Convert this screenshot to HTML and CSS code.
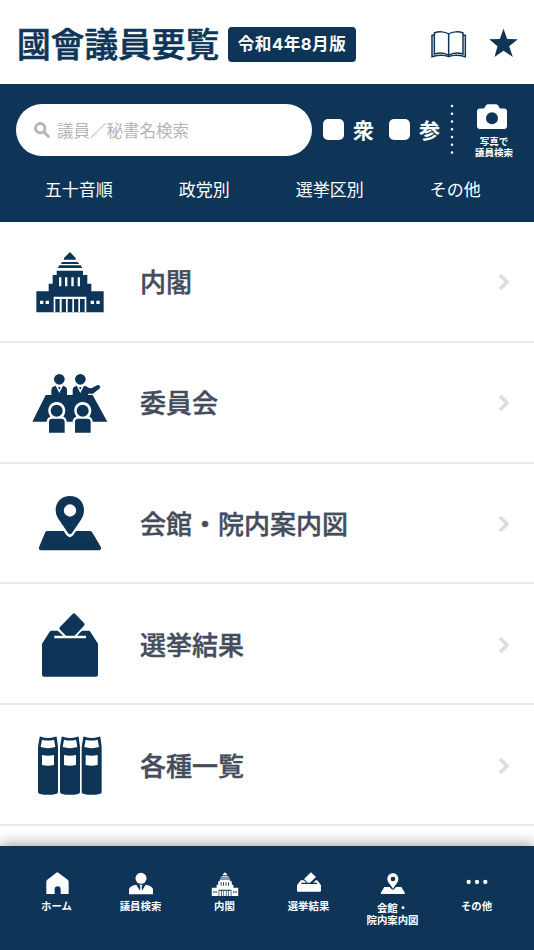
FILE: index.html
```html
<!DOCTYPE html>
<html lang="ja">
<head>
  <meta charset="UTF-8" />
  <meta name="viewport" content="width=device-width, initial-scale=1.0"/>
  <title>國會議員要覧</title>
  <link rel="stylesheet" href="styles.css">
</head>
<body>
  <header class="header">
    <h1>國會議員要覧</h1>
    <span class="edition">令和4年8月版</span>
    <svg class="icon-book" viewBox="500 86 114 90">
      <path class="line" d="M513 98C524 93 545 93 556 101C567 93 588 93 599 98V161C586 157 567 157 556 165C545 157 526 157 513 161ZM556 101V165"/>
      <path class="line" d="M513 105H506V169C524 164 543 163 556 169C569 163 588 164 606 169V105H599"/>
    </svg>
    <svg class="icon-star" viewBox="674 84 92 90">
      <path d="M720 86L731 117L763 118L737 139L748 171L720 152L693 171L702 139L677 118L709 117Z"/>
    </svg>
  </header>

  <section class="search">
    <div class="search-row">
      <div class="search-box">
        <svg class="icon-search" viewBox="0 0 16 16">
          <circle cx="6.2" cy="6.2" r="4.7"/>
          <path d="M9.8 9.8L14.4 14.4"/>
        </svg>
        <span>議員／秘書名検索</span>
      </div>
      <label class="check"><i></i>衆</label>
      <label class="check"><i></i>参</label>
      <svg class="dots" viewBox="0 0 4 52">
        <path d="M2 2V50"/>
      </svg>
      <div class="photo">
        <svg viewBox="0 0 30 26">
          <path fill-rule="evenodd" d="M3 4.500H7L9 1.200Q9.700 0.200 11 0.200H19Q20.300 0.200 21 1.200L23 4.500H27Q30 4.500 30 7.500V22Q30 25 27 25H3Q0 25 0 22V7.500Q0 4.500 3 4.500ZM15 8.200A6 6 0 1 0 15 20.200A6 6 0 1 0 15 8.200Z"/>
        </svg>
        <span>写真で<br>議員検索</span>
      </div>
    </div>
    <nav class="tabs">
      <a>五十音順</a>
      <a>政党別</a>
      <a>選挙区別</a>
      <a>その他</a>
    </nav>
  </section>

  <main class="list">
    <div class="item">
      <svg class="item-icon" viewBox="30 21 240 216">
        <g id="diet">
          <path d="M150 36L167 54V59H132V54ZM127 66H173L178 72H122ZM118 76H182L187 84H113ZM110 92H189V105H202V131H214V154H251V217H49V154H86V131H98V105H110Z"/>
          <path class="cut" d="M117 112h7v27h-7zM135 112h7v27h-7zM154 112h7v27h-7zM173 112h7v27h-7zM60 182h10v10h-10zM77 182h10v10h-10zM212 182h10v10h-10zM229 182h10v10h-10zM101 170H199V217H194V177H180V217H175V177H162V217H157V177H143V217H138V177H125V217H119V177H106V217H101Z"/>
        </g>
      </svg>
      <span>内閣</span>
      <svg class="chevron" viewBox="0 0 12 18"><path d="M2 2L9 9L2 16"/></svg>
    </div>
    <div class="item">
      <svg class="item-icon" viewBox="30 22 240 216">
        <path d="M77 103H218L262 183H37Z"/>
        <circle cx="118" cy="56" r="16"/>
        <circle cx="181" cy="56" r="16"/>
        <path d="M94 104V88Q94 78 107 75L118 97L129 75Q141 78 141 88V104ZM158 104V88Q158 78 170 75L181 97L192 75Q200 76 207 82L214 83L233 73Q239 72 241 79L238 84L219 99H204V104Z"/>
        <path d="M115 79H121L120 86H116ZM178 79H184L183 86H179Z"/>
        <path class="cut" d="M110 124C91 124 80 143 87 160L91 168Q80 172 80 183V218H140V183Q140 172 130 168L134 160C141 143 129 124 110 124ZM188 124C169 124 158 143 165 160L169 168Q158 172 158 183V218H218V183Q218 172 208 168L212 160C219 143 207 124 188 124Z"/>
        <circle cx="110" cy="150" r="18"/>
        <circle cx="188" cy="150" r="18"/>
        <path d="M87 216V184Q87 174 97 174H124Q134 174 134 184V216ZM165 216V184Q165 174 175 174H202Q212 174 212 184V216Z"/>
      </svg>
      <span>委員会</span>
      <svg class="chevron" viewBox="0 0 12 18"><path d="M2 2L9 9L2 16"/></svg>
    </div>
    <div class="item">
      <svg class="item-icon" viewBox="30 24 240 216">
        <path d="M82 153H131L139 165Q149 178 160 165L168 153H209Q214 153 216 156L243 202Q245 210 237 211H63Q55 210 57 202L76 156Q78 153 82 153Z"/>
        <path fill-rule="evenodd" d="M150 48C125 48 107 66 107 90C107 105 113 114 120 124L144 159Q150 167 156 159L180 124C187 114 192 105 192 90C192 66 175 48 150 48ZM150 73A18.500 18.500 0 1 1 150 110A18.500 18.500 0 1 1 150 73Z"/>
      </svg>
      <span>会館・院内案内図</span>
      <svg class="chevron" viewBox="0 0 12 18"><path d="M2 2L9 9L2 16"/></svg>
    </div>
    <div class="item">
      <svg class="item-icon" viewBox="30 26 240 216">
        <path d="M95 91H113L130 106H103V114H198V106H171L186 91H206Q209 91 211 94L234 130V223Q234 229 228 229H72Q66 229 66 223V130L89 94Q91 91 95 91Z"/>
        <path d="M158 41Q162 37 166 41L192 68Q196 72 192 76L164 106H138L120 88Q116 84 120 80Z"/>
      </svg>
      <span>選挙結果</span>
      <svg class="chevron" viewBox="0 0 12 18"><path d="M2 2L9 9L2 16"/></svg>
    </div>
    <div class="item">
      <svg class="item-icon" viewBox="30 28 240 216">
        <g id="book">
          <path d="M59 49Q59 46 63 48Q84 56 106 48Q110 46 110 49L114 78V215Q114 218 110 219Q84 226 58 219Q54 218 54 215V78Z"/>
          <path class="cut" d="M66 57Q84 62 102 57L106 79Q84 86 62 79ZM66 103Q84 107 102 103V133Q84 138 66 133Z"/>
        </g>
        <use href="#book" x="66"/>
        <use href="#book" x="131"/>
      </svg>
      <span>各種一覧</span>
      <svg class="chevron" viewBox="0 0 12 18"><path d="M2 2L9 9L2 16"/></svg>
    </div>
  </main>

  <footer class="footer">
    <a>
      <svg viewBox="130 150 84 84"><path d="M170 158Q173 155 176 158L204 179Q207 182 207 185V222H183V208Q183 199 174 199Q165 199 165 208V222H140V185Q140 182 143 179Z"/></svg>
      <span>ホーム</span>
    </a>
    <a>
      <svg viewBox="384 150 84 84">
        <circle cx="426" cy="175" r="16.500"/>
        <path d="M390 223V209Q390 198 412 194L423 212L424 199L421 194H431L428 199L429 212L440 194Q462 198 462 209V223Z"/>
      </svg>
      <span>議員検索</span>
    </a>
    <a>
      <svg viewBox="43 19 214 214"><use href="#diet"/></svg>
      <span>内閣</span>
    </a>
    <a>
      <svg viewBox="92 150 84 84">
        <path d="M109 181H118L126 188H111V192H158V188H147L154 181H159L170 196V212Q170 215 167 215H101Q98 215 98 212V196Z"/>
        <path d="M140 157L155 171L137 188H130L119 177Z"/>
      </svg>
      <span>選挙結果</span>
    </a>
    <a>
      <svg viewBox="342 150 84 84">
        <path d="M358 201H374L379 207Q384 212 388 207L393 201H409L420 219Q420 222 417 222H350Q347 222 347 219Z"/>
        <path fill-rule="evenodd" d="M384 160C374 160 367 167 367 177C367 188 378 195 384 207C390 195 400 188 400 177C400 167 393 160 384 160ZM384 170A7 7 0 1 1 384 184A7 7 0 1 1 384 170Z"/>
      </svg>
      <span class="two-line">会館・<br>院内案内図</span>
    </a>
    <a>
      <svg viewBox="596 150 84 84">
        <circle cx="613" cy="186" r="6.500"/>
        <circle cx="638" cy="186" r="6.500"/>
        <circle cx="663" cy="186" r="6.500"/>
      </svg>
      <span>その他</span>
    </a>
  </footer>
</body>
</html>
```

FILE: styles.css
```css
:root {
  --navy: #0e3558;
  --text: #454c5b;
  --line: #e8e8e8;
  --cut: #fff;
}

* {
  box-sizing: border-box;
}

body {
  margin: 0;
  height: 950px;
  display: flex;
  flex-direction: column;
  overflow: hidden;
  background: #fff;
  font-family: "Noto Sans CJK JP", sans-serif;
}

svg {
  display: block;
  flex: none;
}

.header {
  height: 84px;
  display: flex;
  align-items: center;
  padding: 5px 15px 0 17px;
  color: var(--navy);
  fill: var(--navy);
}

h1 {
  margin: 0;
  width: 211px;
  padding-bottom: 3px;
  font-size: 33.7px;
  line-height: 40px;
  font-weight: 500;
  -webkit-text-stroke: 0.6px var(--navy);
  white-space: nowrap;
}

.edition {
  width: 128px;
  height: 35px;
  border-radius: 4px;
  background: var(--navy);
  color: #fff;
  font-family: Inter, "Noto Sans CJK JP", sans-serif;
  font-size: 16.6px;
  line-height: 35px;
  font-weight: 700;
  letter-spacing: 0.5px;
  text-align: center;
  white-space: nowrap;
}

.icon-book {
  width: 38px;
  height: 30px;
  margin: 0 0 2px auto;
}

.line {
  fill: none;
  stroke: var(--navy);
  stroke-width: 4.5;
}

.icon-star {
  width: 31px;
  height: 30px;
  margin: 0 0 3px 20px;
}

.search {
  height: 138px;
  padding: 20px 16px 0;
  background: var(--navy);
  color: #fff;
}

.search-row {
  display: flex;
  align-items: flex-start;
}

.search-box {
  width: 296px;
  height: 52px;
  display: flex;
  align-items: center;
  gap: 7px;
  padding: 0 18px 1px;
  border-radius: 26px;
  background: #fff;
  color: #b5b5b5;
  font-size: 16.5px;
  line-height: 24px;
}

.icon-search {
  width: 16px;
  height: 16px;
  fill: none;
  stroke: #b5b5b5;
  stroke-width: 2.8;
  stroke-linecap: round;
}

.check {
  display: flex;
  align-items: center;
  gap: 9px;
  height: 50px;
  margin-left: 11px;
  font-size: 21px;
  line-height: 24px;
  font-weight: 700;
}

.check + .check {
  margin-left: 15px;
}

.check i {
  width: 21px;
  height: 21px;
  border-radius: 5px;
  background: #fff;
}

.dots {
  width: 4px;
  height: 52px;
  margin-left: 10px;
  fill: none;
  stroke: #fff;
  stroke-width: 2.6;
  stroke-linecap: round;
  stroke-dasharray: 0 7.75;
}

.photo {
  display: flex;
  flex-direction: column;
  align-items: center;
  width: 46px;
  margin-left: 17px;
  fill: #fff;
  font-size: 9.5px;
  line-height: 11px;
  font-weight: 700;
  text-align: center;
  white-space: nowrap;
}

.photo svg {
  width: 30px;
  height: 26px;
  margin: 0 4px 6px 0;
}

.tabs {
  display: flex;
  margin-top: 18px;
  font-size: 17px;
  line-height: 26px;
}

.tabs a {
  flex: 1;
  text-align: center;
}

.list {
  flex: 1;
  color: var(--text);
}

.item {
  height: 120.8px;
  display: flex;
  align-items: center;
  padding: 0 24px 0 30px;
  border-bottom: 2px solid var(--line);
  font-size: 26px;
  line-height: 38px;
  font-weight: 500;
  -webkit-text-stroke: 0.4px var(--text);
}

.item-icon {
  width: 80px;
  height: 72px;
  margin: 3px 30px 0 0;
  fill: var(--navy);
}

.cut {
  fill: var(--cut);
}

.chevron {
  width: 12px;
  height: 18px;
  margin: 2px 0 0 auto;
  fill: none;
  stroke: #ddd;
  stroke-width: 3.6;
}

.footer {
  --cut: var(--navy);
  position: relative;
  height: 104px;
  display: flex;
  padding: 24px 15px 0;
  background: var(--navy);
  box-shadow: 0 -3px 12px rgba(0, 0, 0, 0.32);
  color: #fff;
  fill: #fff;
}

.footer a {
  flex: 1;
  display: flex;
  flex-direction: column;
  align-items: center;
  font-size: 10.4px;
  line-height: 12px;
  font-weight: 700;
  text-align: center;
  white-space: nowrap;
}

.footer svg {
  width: 28px;
  height: 28px;
  margin: 0 1px 2px 0;
}

.footer span {
  margin-right: 1px;
}

.two-line {
  padding-top: 2px;
}
```
